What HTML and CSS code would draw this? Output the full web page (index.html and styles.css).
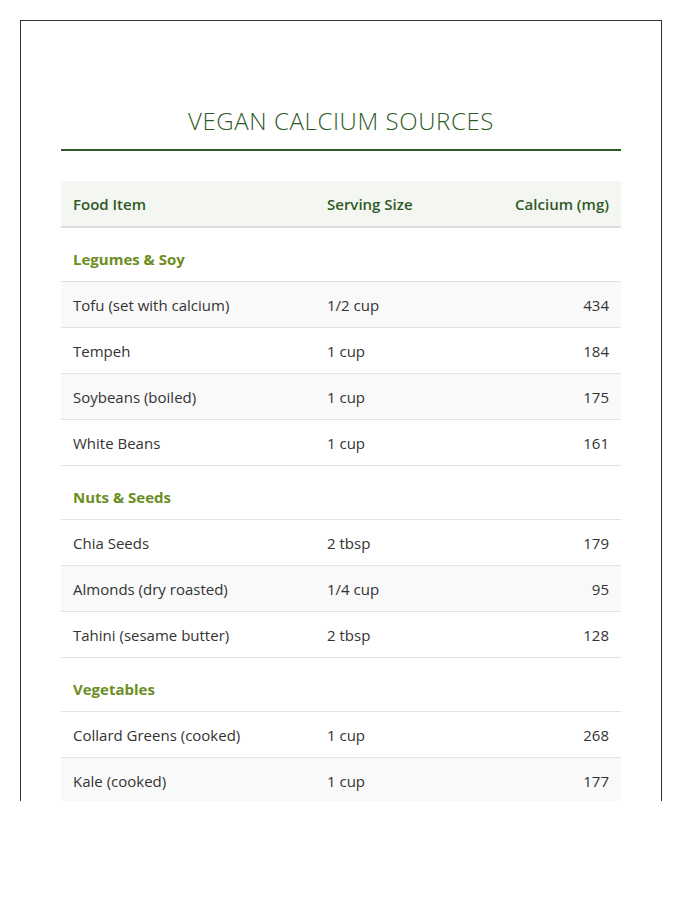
FILE: index.html
```html
<!DOCTYPE html>
<html lang="en">
<head>
<meta charset="utf-8">
<title>Vegan Calcium Sources</title>
<link rel="stylesheet" href="styles.css">
</head>
<body>
<div class="card">
  <h1 class="title">Vegan Calcium Sources</h1>
  <table class="food-table">
    <colgroup>
      <col class="c-food">
      <col class="c-serving">
      <col class="c-calcium">
    </colgroup>
    <thead>
      <tr>
        <th>Food Item</th>
        <th>Serving Size</th>
        <th class="num">Calcium (mg)</th>
      </tr>
    </thead>
    <tbody>
      <tr class="category"><td colspan="3">Legumes &amp; Soy</td></tr>
      <tr><td>Tofu (set with calcium)</td><td>1/2 cup</td><td class="num">434</td></tr>
      <tr><td>Tempeh</td><td>1 cup</td><td class="num">184</td></tr>
      <tr><td>Soybeans (boiled)</td><td>1 cup</td><td class="num">175</td></tr>
      <tr><td>White Beans</td><td>1 cup</td><td class="num">161</td></tr>
      <tr class="category"><td colspan="3">Nuts &amp; Seeds</td></tr>
      <tr><td>Chia Seeds</td><td>2 tbsp</td><td class="num">179</td></tr>
      <tr><td>Almonds (dry roasted)</td><td>1/4 cup</td><td class="num">95</td></tr>
      <tr><td>Tahini (sesame butter)</td><td>2 tbsp</td><td class="num">128</td></tr>
      <tr class="category"><td colspan="3">Vegetables</td></tr>
      <tr><td>Collard Greens (cooked)</td><td>1 cup</td><td class="num">268</td></tr>
      <tr><td>Kale (cooked)</td><td>1 cup</td><td class="num">177</td></tr>
    </tbody>
  </table>
</div>
</body>
</html>
```
FILE: styles.css
```css
html, body {
  margin: 0;
  padding: 0;
  background: #ffffff;
}

body {
  padding: 20px;
  font-family: "Segoe UI", "Open Sans", "Noto Sans", sans-serif;
  color: #333333;
}

.card {
  box-sizing: border-box;
  width: 642px;
  height: 781px;
  overflow: hidden;
  border: 1px solid #333333;
  border-bottom: none;
  padding: 85px 40px 0;
  background: #ffffff;
}

.title {
  margin: 0 0 30px;
  padding-bottom: 13px;
  border-bottom: 2px solid #2e5a27;
  text-align: center;
  text-transform: uppercase;
  font-weight: 300;
  font-size: 24px;
  line-height: 30px;
  letter-spacing: 0.6px;
  color: #2e5a27;
}

.food-table {
  width: 100%;
  table-layout: fixed;
  border-collapse: collapse;
  font-size: 15px;
  line-height: 21px;
}

.c-food {
  width: 254px;
}

.c-serving {
  width: 150px;
}

.food-table th {
  background: #f4f6f1;
  color: #2e5a27;
  font-weight: 600;
  font-size: 15px;
  text-align: left;
  padding: 13px 12px 11px;
  border-bottom: 2px solid #dddddd;
}

.food-table .num {
  text-align: right;
}

.food-table td {
  padding: 13px 12px 11px;
  border-bottom: 1px solid #e2e2e2;
}

.food-table tbody tr:nth-child(even) {
  background: #f9f9f9;
}

.food-table tbody tr.category {
  background: #ffffff;
}

.food-table tr.category td {
  padding: 21px 12px 11px;
  color: #6b8e23;
  font-weight: 700;
}
```
